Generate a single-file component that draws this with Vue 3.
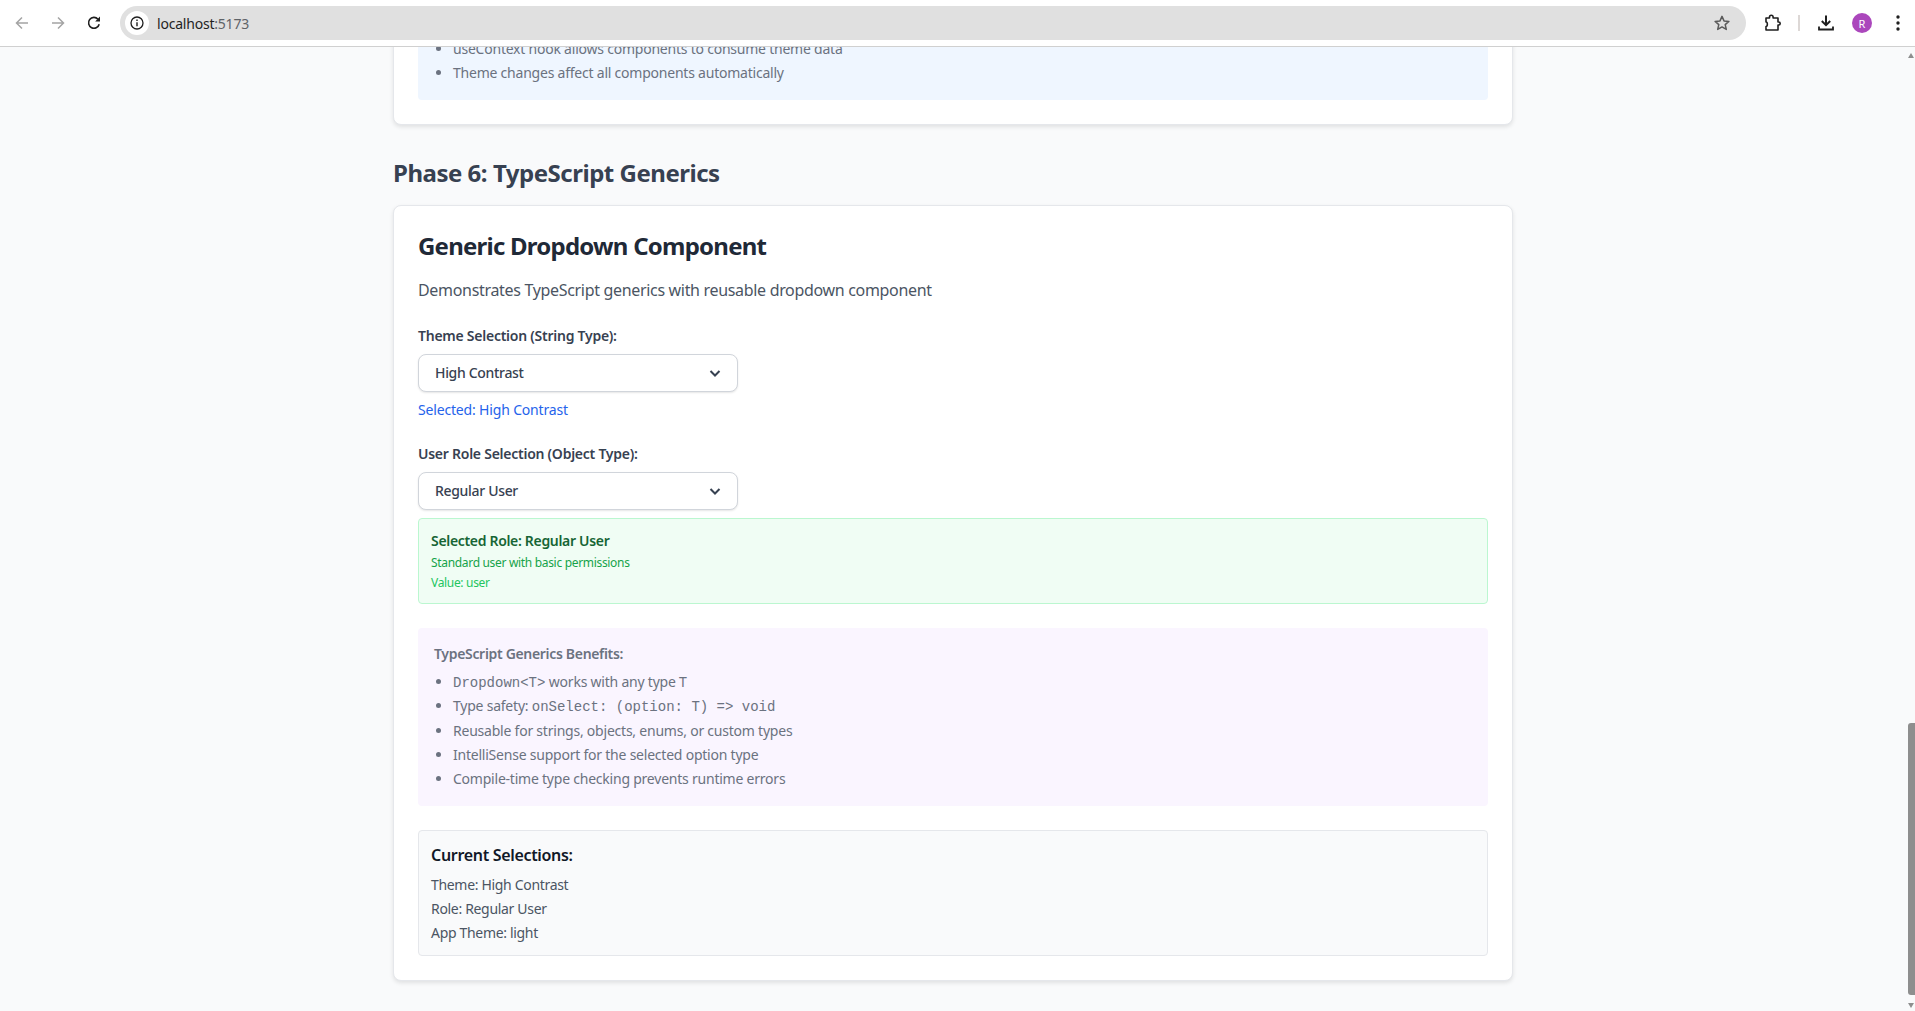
<template>
  <div class="window">
    <header class="toolbar">
      <div class="nav">
        <button class="tool muted">
          <svg width="16" height="16" viewBox="0 0 16 16"><path d="M14 8H3M8 2.500 2.500 8 8 13.500" fill="none" stroke="currentColor" stroke-width="1.500"/></svg>
        </button>
        <button class="tool muted">
          <svg width="16" height="16" viewBox="0 0 16 16"><path d="M2 8h11M8 2.500 13.500 8 8 13.500" fill="none" stroke="currentColor" stroke-width="1.500"/></svg>
        </button>
        <button class="tool">
          <svg width="16" height="16" viewBox="0 0 16 16"><path d="M13.200 9.200A5.400 5.400 0 1 1 12 4.200" fill="none" stroke="currentColor" stroke-width="1.600"/><path d="M14 1.600v4.800H9.200z" fill="currentColor"/></svg>
        </button>
      </div>
      <div class="omnibox">
        <span class="site-info">
          <svg width="16" height="16" viewBox="0 0 16 16"><circle cx="8" cy="8" r="6" fill="none" stroke="currentColor" stroke-width="1.300"/><path d="M8 7.200v4M8 4.600v1.300" fill="none" stroke="currentColor" stroke-width="1.400"/></svg>
        </span>
        <span class="url">localhost<span class="port">:5173</span></span>
        <svg class="star" width="18" height="18" viewBox="0 0 18 18"><path d="m9 2.400 2 4.500 4.900.5-3.700 3.200 1.100 4.800L9 12.900l-4.300 2.500 1.100-4.800L2.100 7.400 7 6.900z" fill="none" stroke="currentColor" stroke-width="1.500" stroke-linejoin="round"/></svg>
      </div>
      <div class="actions">
        <svg class="ext" width="18" height="18" viewBox="0 0 18 18"><path d="M2 4h3.500V3a1.800 1.800 0 0 1 3.600 0v1H14v4h.7a1.500 1.500 0 0 1 0 3H14v5H2v-3.500c1.800 0 1.800-4.500 0-4.500z" fill="none" stroke="currentColor" stroke-width="1.600" stroke-linejoin="round"/></svg>
        <span class="divider"></span>
        <svg class="dl" width="18" height="18" viewBox="0 0 18 18"><path d="M9 1.500v9.500M4.800 7 9 11.200 13.200 7" fill="none" stroke="currentColor" stroke-width="2"/><path d="M2 12.500v3h14v-3" fill="none" stroke="currentColor" stroke-width="1.800"/></svg>
        <span class="avatar">R</span>
        <svg class="dots" width="4" height="16" viewBox="0 0 4 16"><circle cx="2" cy="2" r="1.700"/><circle cx="2" cy="8" r="1.700"/><circle cx="2" cy="14" r="1.700"/></svg>
      </div>
    </header>

    <div ref="pane" class="pane">
      <main class="page">
        <section class="card">
          <div class="info-box">
            <ul>
              <li>useContext hook allows components to consume theme data</li>
              <li>Theme changes affect all components automatically</li>
            </ul>
          </div>
        </section>

        <h2 class="phase">Phase 6: TypeScript Generics</h2>

        <section class="card">
          <h3 class="card-title">Generic Dropdown Component</h3>
          <p class="lead">Demonstrates TypeScript generics with reusable dropdown component</p>

          <label class="field-label">Theme Selection (String Type):</label>
          <div class="dropdown">
            <span>{{ theme }}</span>
            <svg width="16" height="16" viewBox="0 0 16 16"><path d="m3.500 6 4.500 4.500L12.500 6" fill="none" stroke="currentColor" stroke-width="2"/></svg>
          </div>
          <p class="selected">Selected: {{ theme }}</p>

          <label class="field-label">User Role Selection (Object Type):</label>
          <div class="dropdown">
            <span>{{ role.label }}</span>
            <svg width="16" height="16" viewBox="0 0 16 16"><path d="m3.500 6 4.500 4.500L12.500 6" fill="none" stroke="currentColor" stroke-width="2"/></svg>
          </div>
          <div class="role-box">
            <div class="role-title">Selected Role: {{ role.label }}</div>
            <div class="role-desc">{{ role.description }}</div>
            <div class="role-value">Value: {{ role.value }}</div>
          </div>

          <div class="benefits">
            <h4>TypeScript Generics Benefits:</h4>
            <ul>
              <li><code>Dropdown&lt;T&gt;</code> works with any type T</li>
              <li>Type safety: <code>onSelect: (option: T) =&gt; void</code></li>
              <li v-for="item in benefits" :key="item">{{ item }}</li>
            </ul>
          </div>

          <div class="current">
            <h4>Current Selections:</h4>
            <p>Theme: {{ theme }}</p>
            <p>Role: {{ role.label }}</p>
            <p>App Theme: {{ appTheme }}</p>
          </div>
        </section>
      </main>
    </div>

    <div class="scrollbar">
      <span class="arrow up"></span>
      <span class="thumb"></span>
      <span class="arrow down"></span>
    </div>
  </div>
</template>

<script setup>
import { onMounted, ref } from "vue";

const theme = ref("High Contrast");
const role = ref({
  label: "Regular User",
  description: "Standard user with basic permissions",
  value: "user",
});
const appTheme = ref("light");
const benefits = [
  "Reusable for strings, objects, enums, or custom types",
  "IntelliSense support for the selected option type",
  "Compile-time type checking prevents runtime errors",
];

const pane = ref(null);

onMounted(() => {
  pane.value.scrollTop = pane.value.scrollHeight;
});
</script>

<style>
html,
body {
  margin: 0;
  overflow: hidden;
}
</style>

<style scoped>
.window {
  position: relative;
  height: 1011px;
  display: flex;
  flex-direction: column;
  background: #f9fafb;
  font-family: "Noto Sans", sans-serif;
  letter-spacing: -0.02em;
  color: #111827;
  overflow: hidden;
}

.toolbar {
  flex: none;
  height: 46px;
  display: flex;
  align-items: center;
  background: #fff;
  border-bottom: 1px solid #d0d0d0;
}

.nav {
  flex: none;
  display: flex;
  align-items: center;
  gap: 4px;
  padding-left: 6px;
  width: 114px;
  box-sizing: border-box;
}

.tool {
  width: 32px;
  height: 32px;
  display: flex;
  align-items: center;
  justify-content: center;
  border: 0;
  padding: 0;
  background: none;
  color: #1f1f1f;
}

.muted {
  color: #a4a4a4;
}

.omnibox {
  flex: 1;
  height: 34px;
  margin-left: 6px;
  display: flex;
  align-items: center;
  background: #e0e0e0;
  border-radius: 17px;
  padding: 0 15px 0 5px;
}

.site-info {
  width: 24px;
  height: 24px;
  border-radius: 50%;
  background: #fff;
  display: flex;
  align-items: center;
  justify-content: center;
  color: #1f1f1f;
}

.url {
  flex: 1;
  margin-left: 8px;
  font-size: 14px;
  letter-spacing: -0.015em;
  color: #1f1f1f;
}

.port {
  color: #5f6368;
}

.star {
  color: #5a5a5a;
}

.actions {
  flex: none;
  display: flex;
  align-items: center;
  width: 169px;
  box-sizing: border-box;
  padding-left: 18px;
  color: #1f1f1f;
}

.divider {
  width: 2px;
  height: 16px;
  background: #ddd8d6;
  margin: 0 17px 0 16px;
}

.avatar {
  width: 20px;
  height: 20px;
  border-radius: 50%;
  background: #ab47bc;
  color: #fff;
  font-size: 11px;
  letter-spacing: 0;
  display: flex;
  align-items: center;
  justify-content: center;
  margin-left: 17px;
}

.dots {
  margin-left: 24px;
  fill: #1f1f1f;
}

.pane {
  flex: 1;
  overflow: hidden;
  padding-right: 9px;
}

.page {
  width: 1120px;
  margin: 0 auto;
  padding-bottom: 30px;
}

.card {
  background: #fff;
  border: 1px solid #e5e7eb;
  border-radius: 8px;
  box-shadow: 0 2px 4px rgba(0, 0, 0, 0.1);
  padding: 24px;
}

.info-box {
  background: #eff6ff;
  border-radius: 4px;
  padding: 16px 16px 14px;
}

.info-box ul,
.benefits ul {
  margin: 0;
  padding-left: 19px;
  font-size: 14px;
  line-height: 24.4px;
  letter-spacing: -0.016em;
  color: #6b7280;
}

.phase {
  margin: 32px 0 16px;
  font-size: 24px;
  line-height: 32px;
  font-weight: 700;
  letter-spacing: -0.02em;
  color: #374151;
}

.card-title {
  margin: 0;
  font-size: 24px;
  line-height: 32px;
  font-weight: 700;
  letter-spacing: -0.032em;
  color: #1f2937;
}

.lead {
  margin: 16px 0 0;
  font-size: 16px;
  line-height: 24px;
  color: #4b5563;
}

.field-label {
  display: block;
  margin: 24px 0 8px;
  font-size: 14px;
  line-height: 20px;
  font-weight: 600;
  letter-spacing: -0.018em;
  color: #374151;
}

.dropdown {
  width: 320px;
  height: 38px;
  box-sizing: border-box;
  display: flex;
  align-items: center;
  justify-content: space-between;
  padding: 0 14px 0 16px;
  background: #fff;
  border: 1px solid #d1d5db;
  border-radius: 8px;
  box-shadow: 0 1px 2px rgba(0, 0, 0, 0.1);
  font-size: 14px;
  font-weight: 500;
  color: #374151;
}

.selected {
  margin: 8px 0 0;
  font-size: 14px;
  line-height: 20px;
  letter-spacing: -0.012em;
  color: #2563eb;
}

.role-box {
  margin-top: 8px;
  padding: 12px 12px 10px;
  background: #f0fdf4;
  border: 1px solid #bbf7d0;
  border-radius: 4px;
}

.role-title {
  margin-bottom: 2px;
  font-size: 14px;
  line-height: 20px;
  font-weight: 600;
  color: #166534;
}

.role-desc,
.role-value {
  font-size: 12px;
  line-height: 20px;
  color: #16a34a;
}

.role-value {
  color: #22c55e;
}

.benefits {
  margin-top: 24px;
  padding: 16px 16px 14px;
  background: #faf5ff;
  border-radius: 4px;
}

.benefits h4 {
  margin: 0 0 6px;
  font-size: 14px;
  line-height: 20px;
  font-weight: 600;
  color: #6b7280;
}

code {
  font-family: "Liberation Mono", monospace;
  font-size: 14px;
  line-height: 1;
  letter-spacing: 0;
}

.current {
  margin-top: 24px;
  padding: 12px 12px 10px;
  background: #f9fafb;
  border: 1px solid #e5e7eb;
  border-radius: 4px;
}

.current h4 {
  margin: 0 0 6px;
  font-size: 16px;
  line-height: 24px;
  font-weight: 600;
  color: #111827;
}

.current p {
  margin: 0;
  font-size: 14px;
  line-height: 24px;
  color: #4b5563;
}

.scrollbar {
  position: absolute;
  top: 47px;
  right: 0;
  bottom: 0;
  width: 7px;
}

.thumb {
  position: absolute;
  top: 676px;
  height: 272px;
  left: 0;
  right: 0;
  background: #8e8e8e;
  border-radius: 3px 0 0 3px;
}

.arrow {
  position: absolute;
  left: 0;
  width: 0;
  height: 0;
  border-left: 3.5px solid transparent;
  border-right: 3.5px solid transparent;
}

.arrow.up {
  top: 6px;
  border-bottom: 5px solid #8e8e8e;
}

.arrow.down {
  bottom: 3px;
  border-top: 5px solid #8e8e8e;
}
</style>
